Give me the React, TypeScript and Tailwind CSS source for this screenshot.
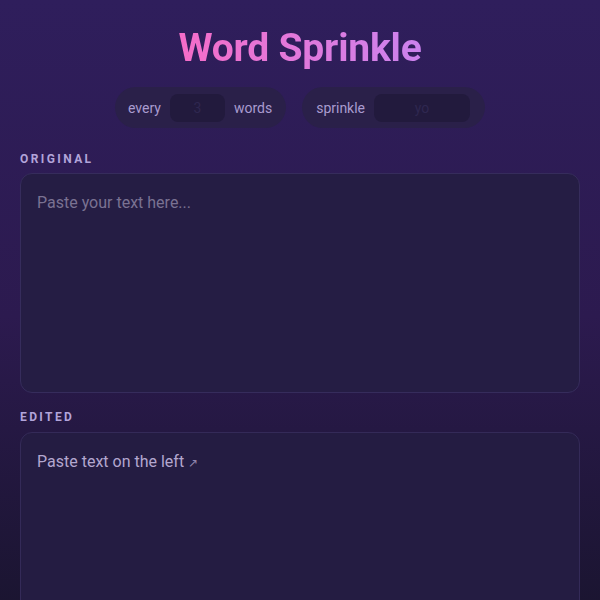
import { useState } from "react";

const App: React.FC = () => {
  const [every, setEvery] = useState("");
  const [word, setWord] = useState("");
  const [text, setText] = useState("");

  return (
    <div
      className="min-h-[600px] w-full bg-gradient-to-b from-[#2f1e5c] via-[#2c1a4f] to-[#19142e] px-5 pt-7 text-[#b6a9d6]"
      style={{ fontFamily: "Roboto, 'Noto Sans', sans-serif" }}
    >
      {/* === Title === */}
      <h1 className="text-center text-[39px] font-bold leading-[40px] tracking-[-0.2px]">
        <span className="bg-gradient-to-r from-[#f56cc8] to-[#cb82ee] bg-clip-text text-transparent">
          Word Sprinkle
        </span>
      </h1>

      {/* === Controls === */}
      <div className="mt-[19px] flex items-center justify-center gap-4">
        <div className="flex h-[41px] items-center gap-[9px] rounded-full bg-[#2a2049] pl-[13px] pr-[14px] text-sm text-[#a99bcf]">
          <span>every</span>
          <input
            value={every}
            onChange={(e) => setEvery(e.target.value)}
            placeholder="3"
            className="h-[28px] w-[55px] rounded-lg bg-[#221a3d] text-center text-sm text-[#b6a9d6] outline-none placeholder:text-[#2f2750]"
          />
          <span>words</span>
        </div>
        <div className="flex h-[41px] items-center gap-[9px] rounded-full bg-[#2a2049] pl-[14px] pr-[15px] text-sm text-[#a99bcf]">
          <span>sprinkle</span>
          <input
            value={word}
            onChange={(e) => setWord(e.target.value)}
            placeholder="yo"
            className="h-[28px] w-[96px] rounded-lg bg-[#221a3d] text-center text-sm text-[#b6a9d6] outline-none placeholder:text-[#2f2750]"
          />
        </div>
      </div>

      {/* === Original === */}
      <div className="mt-[23px] text-xs font-bold tracking-[0.2em] text-[#b2a4da]">ORIGINAL</div>
      <textarea
        value={text}
        onChange={(e) => setText(e.target.value)}
        placeholder="Paste your text here..."
        className="mt-[6px] block h-[220px] w-full resize-none rounded-xl border border-[#362c5c] bg-[#251d44] px-4 py-[17px] text-base leading-6 text-[#d0c6ea] outline-none placeholder:text-[#7a7292]"
      />

      {/* === Edited === */}
      <div className="mt-[16px] text-xs font-bold tracking-[0.2em] text-[#b2a4da]">EDITED</div>
      <div className="mt-[7px] h-[200px] w-full rounded-xl border border-[#342a58] bg-[#241c42] px-4 py-[17px] text-base leading-6 text-[#b3a7cf]">
        {text ? (
          text
        ) : (
          <>
            Paste text on the left <span className="text-[12px] text-[#8f84ad]">↗</span>
          </>
        )}
      </div>
    </div>
  );
};

export default App;
